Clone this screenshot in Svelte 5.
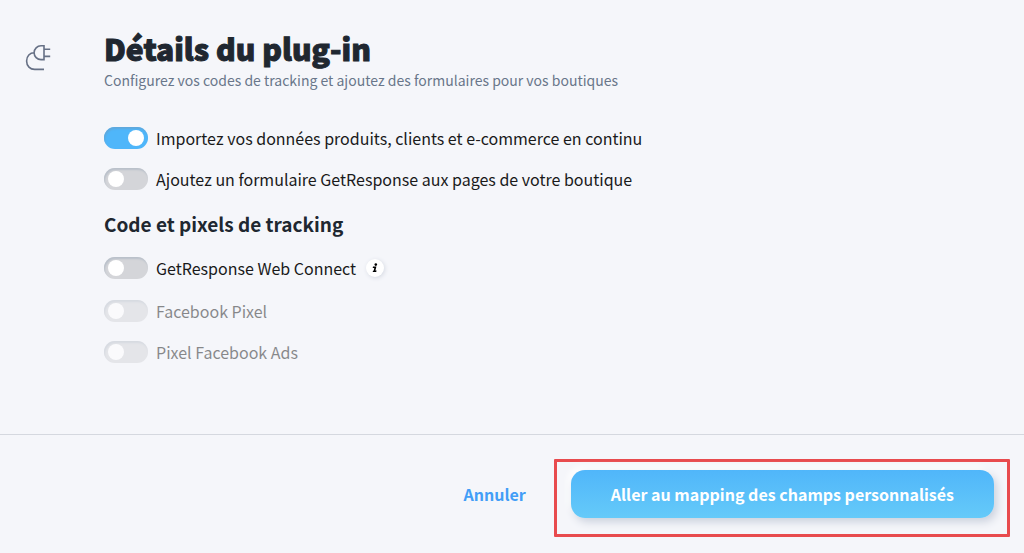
<script lang="ts">
  interface Option {
    id: string;
    label: string;
    checked?: boolean;
    disabled?: boolean;
    info?: boolean;
  }

  let general = $state<Option[]>([
    { id: 'import', label: 'Importez vos données produits, clients et e-commerce en continu', checked: true },
    { id: 'form', label: 'Ajoutez un formulaire GetResponse aux pages de votre boutique', checked: false },
  ]);

  let tracking = $state<Option[]>([
    { id: 'web-connect', label: 'GetResponse Web Connect', checked: false, info: true },
    { id: 'fb-pixel', label: 'Facebook Pixel', checked: false, disabled: true },
    { id: 'fb-ads', label: 'Pixel Facebook Ads', checked: false, disabled: true },
  ]);
</script>

{#snippet toggle(option: Option)}
  <div class="option" class:option--disabled={option.disabled} class:option--info={option.info}>
    <input class="switch" type="checkbox" role="switch" id={option.id} bind:checked={option.checked} disabled={option.disabled} />
    <label for={option.id}>{option.label}</label>
    {#if option.info}
      <button type="button" class="info">
        <svg viewBox="0 0 18 18" aria-hidden="true">
          <circle cx="9.8" cy="5.6" r="1.3" />
          <path d="M7 7.6h3.4l-1 3.9h1.2l-.4 1.5H6.7l.3-1.3h.6l.7-2.7H6.7z" />
        </svg>
      </button>
    {/if}
  </div>
{/snippet}

<form class="page" onsubmit={(e) => e.preventDefault()}>
  <main class="details">
    <svg class="plug" viewBox="0 0 28 28" aria-hidden="true">
      <path d="M20 1.8v13.8h-3a6.9 6.9 0 0 1 0-13.8zM20 5.2h6.2M20 12.4h6.2M10.1 8.8C6 8.8 2.6 12 2.6 17s3.6 8.4 8 8.4H20" />
    </svg>
    <div class="content">
      <h1>Détails du plug-in</h1>
      <p class="lead">Configurez vos codes de tracking et ajoutez des formulaires pour vos boutiques</p>

      <div class="options">
        {#each general as option (option.id)}
          {@render toggle(option)}
        {/each}
      </div>

      <h2>Code et pixels de tracking</h2>

      <div class="options">
        {#each tracking as option (option.id)}
          {@render toggle(option)}
        {/each}
      </div>
    </div>
  </main>

  <footer class="actions">
    <button type="button" class="cancel">Annuler</button>
    <div class="highlight">
      <button type="submit" class="submit">Aller au mapping des champs personnalisés</button>
    </div>
  </footer>
</form>

<style>
:global(body) {
  margin: 0;
  background: #f5f6fa;
}

.page {
  font-family: "Noto Sans CJK SC", "Noto Sans", sans-serif;
  font-size: 16px;
  line-height: 24px;
  color: #1a1a1a;
}

.details {
  display: flex;
  gap: 52px;
  padding: 28px 24px 70px;
}

.plug {
  flex: none;
  width: 28px;
  height: 28px;
  margin-top: 16px;
  fill: none;
  stroke: #667085;
  stroke-width: 1.6;
}

.content {
  flex: 1;
}

h1 {
  margin: 0;
  font-size: 30px;
  line-height: 40px;
  font-weight: 900;
  color: #202730;
  -webkit-text-stroke: 1px #202730;
}

.lead {
  margin: 0 0 34px;
  font-size: 14px;
  color: #69768a;
}

h2 {
  margin: 21px 0 18px;
  font-size: 19px;
  line-height: 24px;
  font-weight: 700;
  color: #202730;
}

.options {
  display: flex;
  flex-direction: column;
  gap: 17px;
}

.option {
  display: flex;
  align-items: center;
}

.option--info {
  min-height: 28px;
}

.option--disabled {
  opacity: 0.5;
}

.switch {
  appearance: none;
  display: flex;
  box-sizing: border-box;
  width: 44px;
  height: 22px;
  margin: 0 8px 0 0;
  padding: 3px 4px;
  border-radius: 11px;
  background: #d4d5d9;
  box-shadow: inset 1px 2px 2px #b9c0ca;
}

.switch::before {
  content: "";
  width: 16px;
  height: 16px;
  border-radius: 50%;
  background: #fff;
}

.switch:checked {
  justify-content: flex-end;
  background: #4fb6fa;
  box-shadow: inset 1px 2px 2px #5fa8dc;
}

.info {
  width: 18px;
  height: 18px;
  margin-left: 10px;
  padding: 0;
  border: 0;
  border-radius: 50%;
  background: #fff;
  box-shadow: 1px 1px 4px #d5d9e2;
}

.info svg {
  display: block;
}

.actions {
  display: flex;
  justify-content: flex-end;
  align-items: baseline;
  gap: 28px;
  padding: 24px 14px 16px;
  border-top: 1px solid #d5d8df;
}

.cancel,
.submit {
  border: 0;
  font: inherit;
  font-weight: 700;
  cursor: pointer;
}

.cancel {
  padding: 0;
  background: none;
  color: #429ef7;
}

.highlight {
  padding: 8px 13px 16px 14px;
  border: 3px solid #e84b4e;
  border-radius: 1px;
}

.submit {
  padding: 12px 40px;
  border-radius: 14px;
  background: linear-gradient(#50b6fa, #65caf9);
  box-shadow: 3px 4px 8px #cbd1dd, -3px -3px 6px #fff;
  color: #fff;
}
</style>
